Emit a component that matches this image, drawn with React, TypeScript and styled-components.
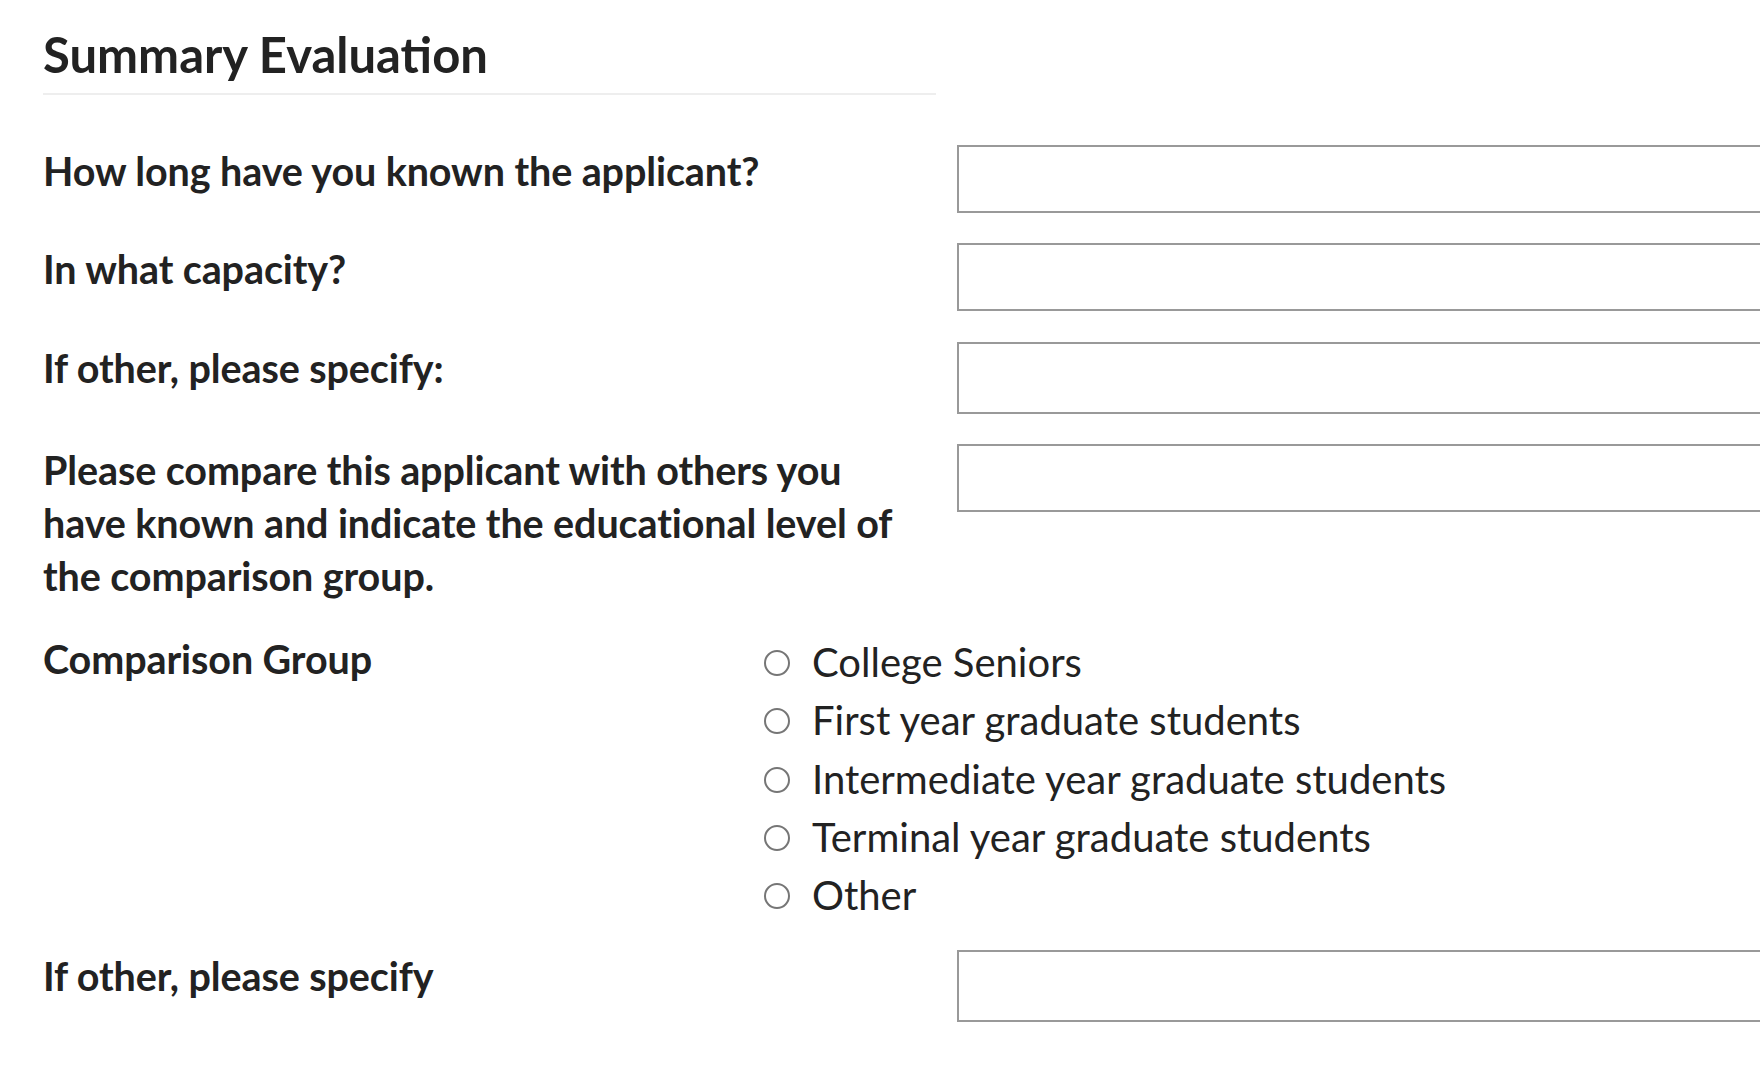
import React from 'react';
import styled, { createGlobalStyle } from 'styled-components';

const GlobalStyle = createGlobalStyle`
  html, body {
    margin: 0;
    padding: 0;
    background: #fff;
    overflow: hidden;
  }
  body {
    font-family: Lato, 'Noto Sans', sans-serif;
    color: #222;
  }
`;

const Page = styled.div`
  width: 1960px;
  padding: 25px 0 0 43px;
  box-sizing: border-box;
`;

const Heading = styled.h2`
  width: 893px;
  margin: 0 0 50px;
  padding-bottom: 9px;
  font-size: 49px;
  line-height: 1.2;
  font-weight: 700;
  border-bottom: 2px solid #eee;
`;

const Fields = styled.div`
  display: flex;
  flex-direction: column;
  gap: 30.5px;
`;

const Row = styled.div<{ $labelWidth?: number }>`
  display: grid;
  grid-template-columns: ${p => p.$labelWidth ?? 914}px 1fr;
  align-items: start;
`;

const Label = styled.label`
  padding-right: 45px;
  font-size: 39.5px;
  letter-spacing: -0.1px;
  line-height: 52.75px;
  font-weight: 700;
`;

const TextInput = styled.input<{ $tall?: boolean }>`
  box-sizing: border-box;
  width: 100%;
  height: ${p => (p.$tall ? 72 : 68)}px;
  margin: 0;
  border: 2px solid #999;
  border-radius: 0;
  background: #fff;
  font: inherit;
  font-size: 36px;
  padding: 0 14px;
  outline: none;
`;

const RadioList = styled.div`
  display: flex;
  flex-direction: column;
  margin-bottom: -4px;
`;

const Option = styled.label`
  display: flex;
  align-items: center;
  gap: 22px;
  height: 58.2px;
  font-size: 40px;
  font-weight: 400;
`;

const Radio = styled.input`
  appearance: none;
  flex: none;
  width: 26px;
  height: 26px;
  margin: 2px 0 0;
  border: 2px solid #767676;
  border-radius: 50%;
  background: #fff;
`;

const groups = [
  'College Seniors',
  'First year graduate students',
  'Intermediate year graduate students',
  'Terminal year graduate students',
  'Other',
];

export default function App() {
  return (
    <Page>
      <GlobalStyle />
      <Heading>Summary Evaluation</Heading>
      <Fields>
        <Row>
          <Label>How long have you known the applicant?</Label>
          <TextInput />
        </Row>
        <Row>
          <Label>In what capacity?</Label>
          <TextInput />
        </Row>
        <Row>
          <Label>If other, please specify:</Label>
          <TextInput $tall />
        </Row>
        <Row>
          <Label>
            Please compare this applicant with others you have known and indicate the educational
            level of the comparison group.
          </Label>
          <TextInput />
        </Row>
        <Row $labelWidth={721}>
          <Label>Comparison Group</Label>
          <RadioList>
            {groups.map(g => (
              <Option key={g}>
                <Radio type="radio" name="group" />
                {g}
              </Option>
            ))}
          </RadioList>
        </Row>
        <Row>
          <Label>If other, please specify</Label>
          <TextInput $tall />
        </Row>
      </Fields>
    </Page>
  );
}
